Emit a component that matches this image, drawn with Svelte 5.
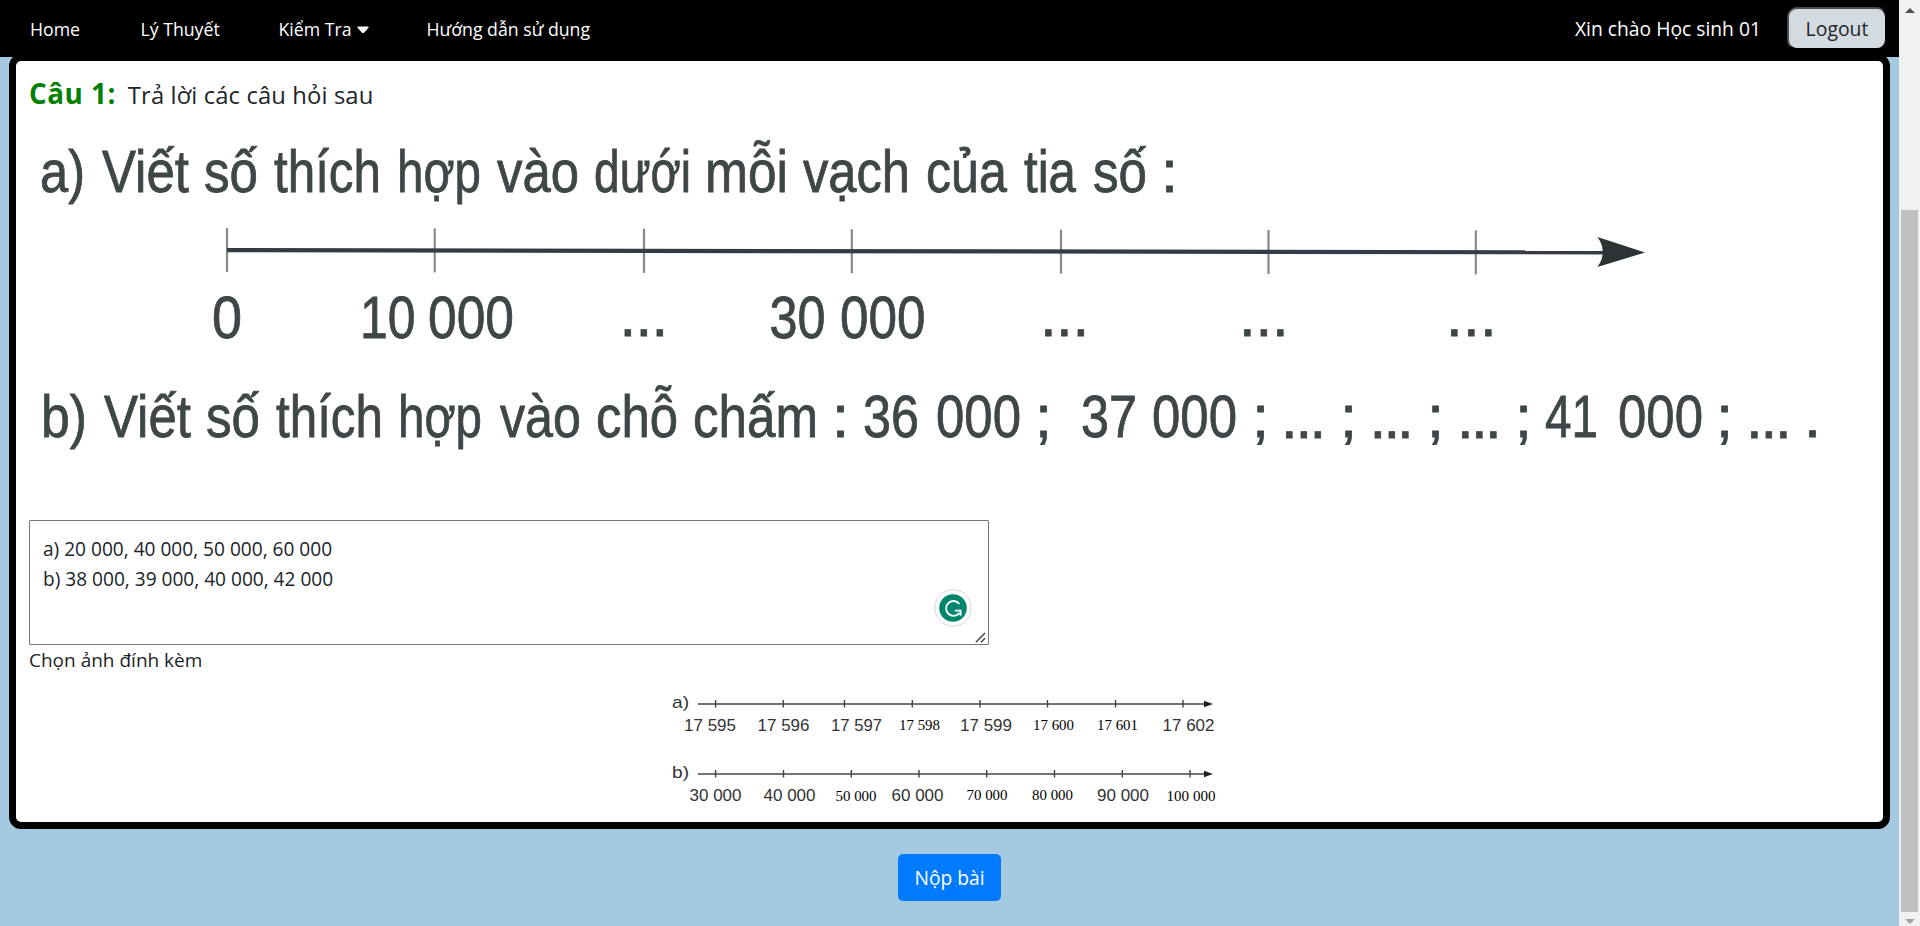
<script>
  const links = [
    { label: 'Home', width: 110.5 },
    { label: 'Lý Thuyết', width: 138 },
    { label: 'Kiểm Tra', width: 148, menu: true },
    { label: 'Hướng dẫn sử dụng', width: 200 }
  ];

  // Horizontal condensing of the exercise lettering
  const k = 0.83;

  // Words of the exercise: [text, left edge, width]
  const lineA = [
    ['a)', 40, 45], ['Viết', 102, 87], ['số', 204, 54], ['thích', 274, 107], ['hợp', 397, 84],
    ['vào', 497, 82], ['dưới', 594, 97], ['mỗi', 705, 83], ['vạch', 803, 107], ['của', 926, 81],
    ['tia', 1024, 52], ['số', 1093, 54], [':', 1161, 17]
  ];
  const lineB = [
    ['b)', 41, 46], ['Viết', 104, 87], ['số', 206, 54], ['thích', 276, 107], ['hợp', 398, 84],
    ['vào', 500, 81], ['chỗ', 596, 82], ['chấm', 693, 125], [':', 832, 17], ['36', 863, 56],
    ['000', 936, 85], [';', 1035, 17], ['37', 1081, 56], ['000', 1152, 85], [';', 1252, 17],
    [';', 1340, 17], [';', 1427, 17], [';', 1515, 17], ['41', 1545, 53], ['000', 1618, 85],
    [';', 1716, 17], ['.', 1804, 17]
  ];
  const dotsB = ['1281 1295.5 1309.5', '1369.5 1383.5 1397', '1457 1471 1485', '1746 1760.5 1775'];
  const numbers = [['0', 212, 30], ['10', 360, 55.5], ['000', 428, 86], ['30', 769.5, 56], ['000', 840, 85.5]];
  const dotsA = ['619.5 635.5 651.5', '1040 1056 1072.5', '1239 1255.5 1272', '1446 1463 1480'];
  const ticks = [227, 434.7, 644, 851.8, 1061, 1268.5, 1475.8];

  // Attached answer: [text, left edge, width, baseline, serif]
  const rows = [
    {
      name: 'a)', y: 704,
      ticks: [715.6, 783.3, 844.5, 912.3, 980, 1047.5, 1115.5, 1183],
      labels: [
        ['17 595', 684, 52, 731], ['17 596', 757.5, 52, 731], ['17 597', 831, 51, 731],
        ['17 598', 899, 41, 730, true], ['17 599', 960, 52, 731], ['17 600', 1033, 41, 730, true],
        ['17 601', 1097, 41, 729.5, true], ['17 602', 1162.5, 52, 731]
      ]
    },
    {
      name: 'b)', y: 774,
      ticks: [715.6, 783.5, 851.3, 919, 986.7, 1054.5, 1122.3, 1190],
      labels: [
        ['30 000', 689.5, 52, 801], ['40 000', 763.5, 52, 801], ['50 000', 835.5, 41, 801, true],
        ['60 000', 891.5, 52, 801], ['70 000', 966.5, 41, 800, true], ['80 000', 1032, 41, 800, true],
        ['90 000', 1097, 52, 801], ['100 000', 1166.5, 49, 801, true]
      ]
    }
  ];

  let answer = $state('a) 20 000, 40 000, 50 000, 60 000\nb) 38 000, 39 000, 40 000, 42 000');
</script>

{#snippet words(list, y)}
  <g transform="scale({k} 1)">
    {#each list as [t, x, w]}
      <text x={x / k} {y} textLength={w / k} lengthAdjust="spacingAndGlyphs">{t}</text>
    {/each}
  </g>
{/snippet}

<div class="window">
  <div class="page">
    <nav>
      {#each links as link}
        <a href="#top" style="width: {link.width}px">
          <span>{link.label}</span>
          {#if link.menu}
            <svg class="caret" width="12" height="8" viewBox="0 0 12 8"><path d="M1 .5h10q1 .2.5 1.2L7 6.8q-1 .9-2 0L.5 1.7Q0 .7 1 .5z" fill="#fff" /></svg>
          {/if}
        </a>
      {/each}
      <span class="hello">Xin chào Học sinh 01</span>
      <button class="logout">Logout</button>
    </nav>

    <main>
      <h1><b>Câu 1:</b><span>Trả lời các câu hỏi sau</span></h1>

      <svg class="exercise" width="1841" height="402" viewBox="29 110 1841 402">
        {@render words(lineA, 192)}
        {#each ticks as x, i}
          <path class="tick" d="M{x} {228 + i * 0.4}v44" />
        {/each}
        <path d="M227 248L1610 250.3V254.5L227 252.3z" fill="#353c46" />
        <path d="M1597.5 237L1645 252.5L1597.5 267Q1608 252 1597.5 237z" fill="#2d3335" />
        {@render words(numbers, 338.5)}
        {#each dotsA as x}
          <text {x} y="336">...</text>
        {/each}
        {@render words(lineB, 437)}
        {#each dotsB as x}
          <text {x} y="437.5">...</text>
        {/each}
      </svg>

      <div class="answer">
        <textarea bind:value={answer} spellcheck="false"></textarea>
        <svg class="checker" width="38" height="38" viewBox="0 0 38 38">
          <circle cx="19" cy="19" r="18.2" fill="#fff" stroke="#d3d5e3" />
          <circle cx="19" cy="19" r="13.8" fill="#00856f" />
          <path d="M25.3 14.8A7.4 7.4 0 1 0 25.2 24.2M20.8 21.6h5.7v5.2" fill="none" stroke="#fff" stroke-width="1.9" />
        </svg>
        <svg class="grip" width="11" height="11" viewBox="0 0 11 11"><path d="M.8 10.2L10 1M6 10.2L10 6.2" stroke="#444" stroke-width="1.5" /></svg>
      </div>
      <p>Chọn ảnh đính kèm</p>

      <svg class="attachment" width="592" height="142" viewBox="650 680 592 142">
        {#each rows as row}
          <text x="672" y={row.y + 4.3} textLength="17" lengthAdjust="spacingAndGlyphs">{row.name}</text>
          <path class="thin" d="M698 {row.y}H1206" />
          <path d="M1204 {row.y - 3.2}l9 3.2l-9 3.2z" fill="#222" />
          {#each row.ticks as x}
            <path class="thin" d="M{x} {row.y - 4}v7.5" />
          {/each}
          {#each row.labels as [t, x, w, y, serif]}
            <text class:serif {x} {y} textLength={w} lengthAdjust="spacingAndGlyphs">{t}</text>
          {/each}
        {/each}
      </svg>
    </main>

    <button class="submit">Nộp bài</button>
  </div>

  <div class="scrollbar">
    <svg width="10" height="5" viewBox="0 0 10 5"><path d="M0 5L5 0L10 5z" fill="#505050" /></svg>
    <div class="thumb"></div>
    <svg width="10" height="5" viewBox="0 0 10 5"><path d="M0 0H10L5 5z" fill="#a3a3a3" /></svg>
  </div>
</div>

<style>
  :global(body) { margin: 0; overflow: hidden; }
  .window {
    display: flex;
    width: 1920px;
    height: 926px;
    background: #a5c9e1;
    font-family: "Open Sans", "Noto Sans", sans-serif;
    color: #212529;
  }
  .page { width: 1899px; display: flex; flex-direction: column; }
  nav {
    box-sizing: border-box;
    height: 57px;
    padding: 0 12px 0 30px;
    display: flex;
    align-items: center;
    flex: none;
    background: #000;
    color: #fff;
  }
  nav a {
    display: flex;
    align-items: center;
    gap: 5px;
    color: #fff;
    text-decoration: none;
    white-space: nowrap;
    font-size: 17.7px;
  }
  .caret { margin-top: 3px; }
  .hello { margin-left: auto; margin-right: 26px; font-size: 19.3px; }
  button { font-family: inherit; padding: 0; box-sizing: border-box; }
  .logout {
    width: 100px;
    height: 43px;
    border: 2px outset #000;
    border-color: #4c4c4c #000 #000 #4c4c4c;
    border-radius: 10px;
    background: #d3dae0;
    color: #212529;
    font-size: 19.4px;
  }
  main {
    box-sizing: border-box;
    width: 1881px;
    height: 775px;
    margin: -3px 0 0 9px;
    padding: 0 13px;
    border: 7px solid #000;
    border-radius: 12px;
    background: #fff;
    display: flex;
    flex-direction: column;
    align-items: flex-start;
  }
  h1 {
    height: 49px;
    margin: 0;
    display: flex;
    align-items: baseline;
    gap: 12px;
    padding-top: 12px;
    box-sizing: border-box;
    line-height: 40px;
    font-size: 23.8px;
    letter-spacing: 0.12px;
    font-weight: 400;
  }
  h1 b { font-size: 27.8px; letter-spacing: 0.5px; color: #008000; }
  svg { display: block; flex: none; }
  .exercise { filter: blur(0.7px); }
  .exercise text {
    font: 60px "Liberation Sans", Arial, sans-serif;
    fill: #3f4647;
    stroke: #3f4647;
    stroke-width: 0.8;
  }
  .tick { stroke: #888; stroke-width: 2.2; }
  .answer { position: relative; width: 960px; height: 125px; margin-top: 8px; }
  textarea {
    box-sizing: border-box;
    display: block;
    width: 960px;
    height: 125px;
    padding: 13px;
    border: 1px solid #767676;
    border-radius: 1px;
    resize: none;
    outline: none;
    background: #fff;
    color: #212529;
    font: 19.1px/30px "Open Sans", "Noto Sans", sans-serif;
  }
  .checker { position: absolute; right: 17px; bottom: 18px; }
  .grip { position: absolute; right: 3px; bottom: 2px; }
  p { height: 30px; margin: 0; line-height: 31px; font-size: 19px; }
  .attachment { align-self: center; margin: 5px 0 0 -7px; }
  .attachment text { font: 16.6px "Liberation Sans", Arial, sans-serif; fill: #333; }
  .attachment text.serif { font: 15px "Liberation Serif", "Times New Roman", serif; fill: #000; }
  .thin { stroke: #444; stroke-width: 1.4; }
  .submit {
    width: 103px;
    height: 47px;
    margin: 25px 0 0 898px;
    border: 0;
    border-radius: 5px;
    background: #007bff;
    color: #fff;
    font-size: 19.2px;
  }
  .scrollbar {
    box-sizing: border-box;
    width: 21px;
    padding: 8px 0 2px;
    display: flex;
    flex-direction: column;
    align-items: center;
    justify-content: space-between;
    background: #f1f1f1;
  }
  .thumb { width: 17px; height: 702px; margin: 190px 0 0; background: #c1c1c1; }
</style>
